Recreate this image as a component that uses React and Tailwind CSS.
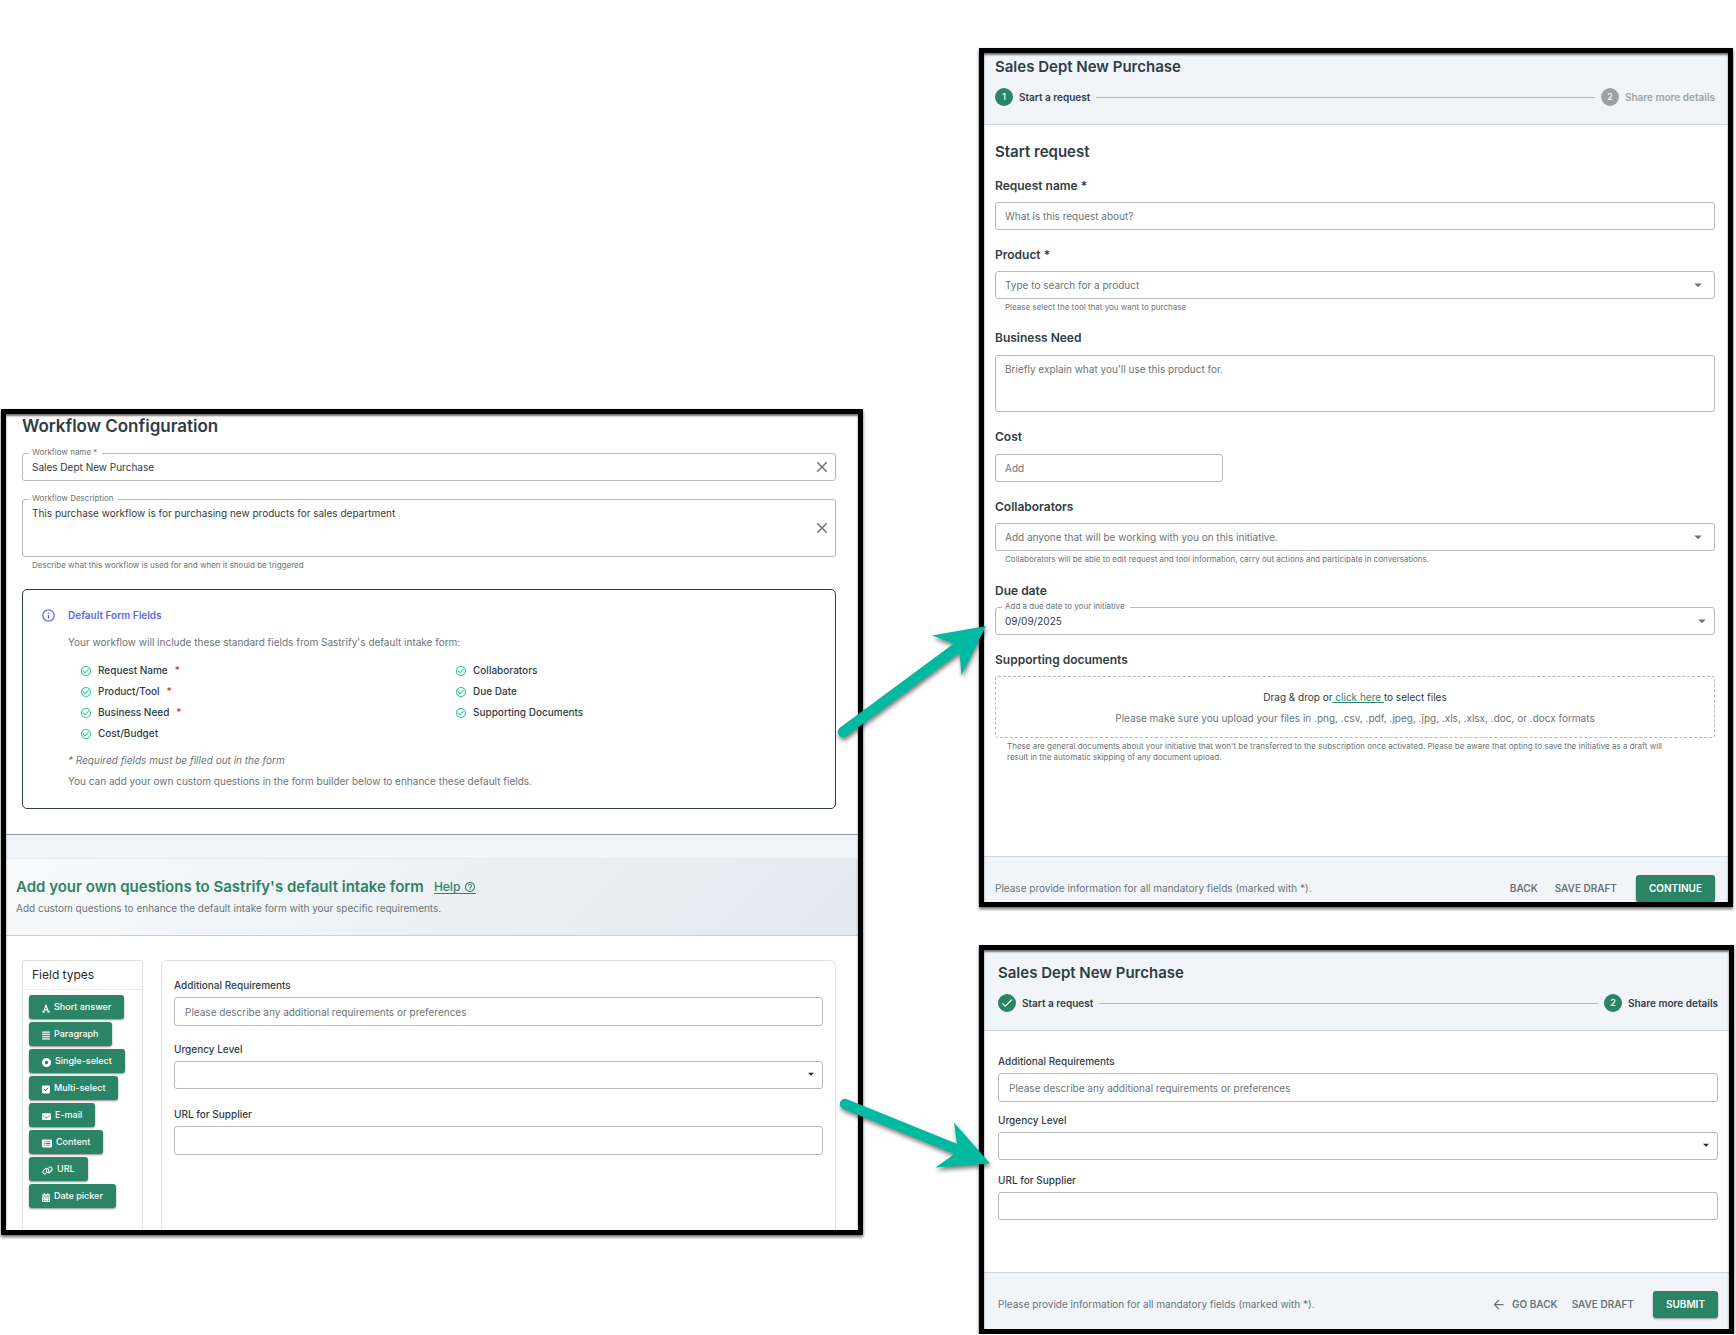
import React, { useId } from "react";
import {
  FaFont,
  FaAlignJustify,
  FaCircleDot,
  FaSquareCheck,
  FaEnvelope,
  FaRectangleList,
  FaLink,
  FaCalendarDays,
} from "react-icons/fa6";
import {
  MdArrowBack,
  MdArrowDropDown,
  MdCheck,
  MdCheckCircleOutline,
  MdClose,
  MdHelpOutline,
  MdInfoOutline,
} from "react-icons/md";

const FIELD_TYPES = [
  { label: "Short answer", Icon: FaFont, width: "w-2" },
  { label: "Paragraph", Icon: FaAlignJustify, width: "w-2" },
  { label: "Single-select", Icon: FaCircleDot, width: "w-[9px]" },
  { label: "Multi-select", Icon: FaSquareCheck, width: "w-2" },
  { label: "E-mail", Icon: FaEnvelope, width: "w-[9px]" },
  { label: "Content", Icon: FaRectangleList, width: "w-[10px]" },
  { label: "URL", Icon: FaLink, width: "w-[11px]" },
  { label: "Date picker", Icon: FaCalendarDays, width: "w-2" },
];

const REQUIRED_DEFAULTS = [
  { label: "Request Name", required: true },
  { label: "Product/Tool", required: true },
  { label: "Business Need", required: true },
  { label: "Cost/Budget" },
];

const OPTIONAL_DEFAULTS = [
  { label: "Collaborators" },
  { label: "Due Date" },
  { label: "Supporting Documents" },
];

function Frame({ className = "", children }) {
  return (
    <div
      className={`relative border-[5px] border-black bg-white shadow-[0_2px_3px_rgba(0,0,0,0.6)] after:pointer-events-none after:absolute after:inset-0 after:shadow-[inset_0_2px_2px_rgba(0,0,0,0.55)] ${className}`}
    >
      {children}
    </div>
  );
}

function FloatingLabel({ htmlFor, children }) {
  return (
    <label
      htmlFor={htmlFor}
      className="absolute -top-[6px] left-[7px] bg-white pr-[5px] pl-[3px] text-[8px] leading-[11px] text-[#6b7478]"
    >
      {children}
    </label>
  );
}

function ClearButton({ label }) {
  return (
    <button
      type="button"
      aria-label={label}
      className="absolute inset-y-0 right-[5px] flex items-center text-[#6b7478]"
    >
      <MdClose size={18} />
    </button>
  );
}

function CheckList({ items }) {
  return (
    <ul>
      {items.map(({ label, required }) => (
        <li key={label} className="flex h-[21px] items-center text-[10px] font-medium text-[#2f3d45]">
          <MdCheckCircleOutline size={12} className="mr-[6px] text-[#36cf98]" />
          {label}
          {required && <span className="ml-[7px] text-[#d32f2f]">*</span>}
        </li>
      ))}
    </ul>
  );
}

function QuestionSelect({ id }) {
  return (
    <div className="relative">
      <select
        id={id}
        defaultValue=""
        className="block h-7 w-full appearance-none rounded-[3px] border border-[#b5b9bb] bg-white px-[10px] text-[10px]"
      >
        <option value=""></option>
      </select>
      <MdArrowDropDown
        size={14}
        className="pointer-events-none absolute top-[6px] right-[5px] text-[#222b30]"
      />
    </div>
  );
}

function CustomQuestions({ roomy }) {
  const id = useId();
  const label = "mb-[5px] block text-[10px] leading-[14px] font-medium text-[#2f3d45]";
  const input =
    "block w-full rounded-[3px] border border-[#b5b9bb] bg-white px-[10px] text-[10px] text-[#2f3d45] placeholder:text-[#6b7478]";
  return (
    <>
      <label htmlFor={`${id}-req`} className={label}>
        Additional Requirements
      </label>
      <input
        id={`${id}-req`}
        type="text"
        placeholder="Please describe any additional requirements or preferences"
        className={`${input} h-[29px]`}
      />
      <div className={roomy ? "mt-4" : "mt-[11px]"}>
        <label htmlFor={`${id}-urgency`} className={label}>
          Urgency Level
        </label>
        <QuestionSelect id={`${id}-urgency`} />
      </div>
      <div className={roomy ? "mt-[18px]" : "mt-[13px]"}>
        <label htmlFor={`${id}-url`} className={label}>
          URL for Supplier
        </label>
        <input id={`${id}-url`} type="url" className={`${input} ${roomy ? "h-[29px]" : "h-7"}`} />
      </div>
    </>
  );
}

function WorkflowConfiguration() {
  return (
    <Frame>
      <div className="pr-[22px] pl-4">
        <h1 className="text-[17px] leading-6 font-semibold text-[#2f3d45]">Workflow Configuration</h1>

        <div className="relative mt-[15px]">
          <FloatingLabel htmlFor="wf-name">Workflow name *</FloatingLabel>
          <input
            id="wf-name"
            type="text"
            defaultValue="Sales Dept New Purchase"
            className="block h-7 w-full rounded-[3px] border border-[#b5b9bb] pr-8 pl-[9px] text-[10px] text-[#2f3d45]"
          />
          <ClearButton label="Clear workflow name" />
        </div>

        <div className="relative mt-[18px]">
          <FloatingLabel htmlFor="wf-desc">Workflow Description</FloatingLabel>
          <textarea
            id="wf-desc"
            defaultValue="This purchase workflow is for purchasing new products for sales department"
            className="block h-[58px] w-full resize-none rounded-[3px] border border-[#b5b9bb] pt-[5px] pr-8 pl-[9px] text-[10px] leading-4 text-[#2f3d45]"
          />
          <ClearButton label="Clear workflow description" />
        </div>
        <p className="mt-[3px] pl-[10px] text-[8px] leading-[11px] text-[#6b7478]">
          Describe what this workflow is used for and when it should be triggered
        </p>

        <section className="mt-[18px] flex gap-3 rounded-[5px] border border-[#2f3d45] pt-[18px] pr-[5px] pb-[19px] pl-[18px]">
          <MdInfoOutline size={15} className="shrink-0 text-[#6366f1]" />
          <div className="min-w-0 flex-1">
            <h2 className="text-[10px] leading-[14px] font-semibold text-[#6366f1]">Default Form Fields</h2>
            <p className="mt-3 text-[10px] leading-4 text-[#6b7478]">
              Your workflow will include these standard fields from Sastrify's default intake form:
            </p>
            <div className="mt-[10px] grid grid-cols-2 pl-3">
              <CheckList items={REQUIRED_DEFAULTS} />
              <CheckList items={OPTIONAL_DEFAULTS} />
            </div>
            <p className="mt-2 text-[10px] leading-4 text-[#6b7478] italic">
              * Required fields must be filled out in the form
            </p>
            <p className="mt-[5px] text-[10px] leading-4 text-[#6b7478]">
              You can add your own custom questions in the form builder below to enhance these default fields.
            </p>
          </div>
        </section>
      </div>

      <div className="mt-[25px] h-6 border-t border-[#92979b] bg-[#f1f5fa]" />
      <section className="border-t border-b border-t-[#e8e9eb] border-b-[#cbd0d8] bg-linear-135 from-[#f9fafb] to-[#e1e8f0] px-[10px] pt-[18px] pb-[19px]">
        <div className="flex items-center gap-[10px]">
          <h2 className="text-[15px] leading-5 font-semibold text-[#2b8465]">
            Add your own questions to Sastrify's default intake form
          </h2>
          <a
            href="#help"
            className="flex items-center gap-1 border-b border-[#2b8465] text-[12px] leading-[13px] font-medium text-[#2b8465]"
          >
            Help <MdHelpOutline size={12} />
          </a>
        </div>
        <p className="mt-[3px] text-[10px] leading-4 text-[#6b7478]">
          Add custom questions to enhance the default intake form with your specific requirements.
        </p>
      </section>

      <div className="flex gap-[18px] pt-6 pr-[22px] pl-4">
        <section className="w-[121px] shrink-0 rounded-t-[3px] border border-b-0 border-[#dfe1e3]">
          <h3 className="border-b border-[#e8eaeb] pl-[9px] text-[12px] leading-[28px] text-[#1f2a30]">
            Field types
          </h3>
          <div className="flex flex-col items-start gap-[3px] px-[6px] pt-[5px] pb-[22px]">
            {FIELD_TYPES.map(({ label, Icon, width }) => (
              <button
                key={label}
                type="button"
                className="flex h-6 items-center gap-1 rounded-[3px] bg-[#2b8465] px-[13px] text-[9px] font-medium text-white shadow-[0_1px_2px_rgba(0,0,0,0.45)]"
              >
                <Icon className={`mt-[2px] h-[9px] ${width}`} />
                {label}
              </button>
            ))}
          </div>
        </section>
        <section className="min-w-0 flex-1 rounded-t-[6px] border border-b-0 border-[#dfe1e3] px-3 pt-[17px]">
          <CustomQuestions roomy />
        </section>
      </div>
    </Frame>
  );
}

function StepMarker({ done, active, number }) {
  return (
    <span
      className={`flex h-[18px] w-[18px] shrink-0 items-center justify-center rounded-full text-[9px] font-medium text-white ${
        active ? "bg-[#2b8465]" : "bg-[#9ea1a3]"
      }`}
    >
      {done ? <MdCheck size={14} /> : number}
    </span>
  );
}

function RequestHeader({ step, className }) {
  return (
    <header className={`border-b border-[#cfd3da] bg-[#f1f5fa] pb-[18px] ${className}`}>
      <h2 className="text-[15px] leading-5 font-semibold text-[#2f3d45]">Sales Dept New Purchase</h2>
      <ol className="mt-[11px] flex items-center text-[10px] font-semibold">
        <li className="flex items-center gap-[6px] text-[#2f3d45]">
          <StepMarker active done={step > 1} number={1} />
          Start a request
        </li>
        <li aria-hidden="true" className="mx-[6px] h-px flex-1 bg-[#b5b9bb]" />
        <li className={`flex items-center gap-[6px] ${step > 1 ? "text-[#2f3d45]" : "text-[#9ea1a3]"}`}>
          <StepMarker active={step > 1} number={2} />
          Share more details
        </li>
      </ol>
    </header>
  );
}

function RequestFooter({ className, backIcon, back, action }) {
  return (
    <footer
      className={`flex items-center border-t border-[#cfd3da] bg-[#f1f5fa] pt-[18px] text-[10px] text-[#6b7478] ${className}`}
    >
      <p className="flex-1">Please provide information for all mandatory fields (marked with *).</p>
      <button type="button" className="flex items-center gap-[6px] font-semibold">
        {backIcon && <MdArrowBack size={15} />}
        {back}
      </button>
      <button type="button" className={`mr-[19px] font-semibold ${backIcon ? "ml-[14px]" : "ml-[17px]"}`}>
        SAVE DRAFT
      </button>
      <button
        type="button"
        className="h-[27px] rounded-[3px] bg-[#2b8465] px-[13px] font-semibold text-white shadow-[0_1px_2px_rgba(0,0,0,0.4)]"
      >
        {action}
      </button>
    </footer>
  );
}

const labelClass = "block text-[12px] leading-[18px] font-semibold text-[#2f3d45]";
const controlClass =
  "block w-full rounded-[3px] border border-[#b5b9bb] bg-white px-[9px] text-[10px] placeholder:text-[#6b7478]";
const hintClass = "mt-[3px] text-[8px] leading-[11px] text-[#6b7478]";

function RequestSelect({ id, label, value, hint }) {
  return (
    <div className="mt-4">
      <label htmlFor={id} className={labelClass}>
        {label}
      </label>
      <div className="relative mt-[7px]">
        <select id={id} className={`${controlClass} h-7 appearance-none text-[#6b7478]`}>
          <option>{value}</option>
        </select>
        <MdArrowDropDown
          size={18}
          className="pointer-events-none absolute top-[5px] right-2 text-[#6b7478]"
        />
      </div>
      <p className={`${hintClass} pl-[10px]`}>{hint}</p>
    </div>
  );
}

function StartRequest() {
  return (
    <Frame className="mr-px">
      <RequestHeader step={1} className="pt-1 pr-[13px] pl-[11px]" />
      <div className="pt-[17px] pr-[13px] pb-[93px] pl-[11px]">
        <h3 className="text-[15px] leading-5 font-semibold text-[#2f3d45]">Start request</h3>
        <div className="mt-[15px]">
          <label htmlFor="rq-name" className={labelClass}>
            Request name *
          </label>
          <input
            id="rq-name"
            type="text"
            placeholder="What is this request about?"
            className={`${controlClass} mt-[7px] h-7`}
          />
        </div>
        <RequestSelect
          id="rq-product"
          label="Product *"
          value="Type to search for a product"
          hint="Please select the tool that you want to purchase"
        />
        <div className="mt-4">
          <label htmlFor="rq-need" className={labelClass}>
            Business Need
          </label>
          <textarea
            id="rq-need"
            placeholder="Briefly explain what you'll use this product for."
            className={`${controlClass} mt-2 h-[57px] resize-none pt-[5px] leading-4`}
          />
        </div>
        <div className="mt-4">
          <label htmlFor="rq-cost" className={labelClass}>
            Cost
          </label>
          <div className="mt-2 w-[228px]">
            <input id="rq-cost" type="text" placeholder="Add" className={`${controlClass} h-7`} />
          </div>
        </div>
        <RequestSelect
          id="rq-collab"
          label="Collaborators"
          value="Add anyone that will be working with you on this initiative."
          hint="Collaborators will be able to edit request and tool information, carry out actions and participate in conversations."
        />
        <div className="mt-[17px]">
          <h4 className={labelClass}>Due date</h4>
          <div className="relative mt-[7px]">
            <FloatingLabel htmlFor="rq-due">Add a due date to your initiative</FloatingLabel>
            <select id="rq-due" className={`${controlClass} h-7 appearance-none text-[#2f3d45]`}>
              <option>09/09/2025</option>
            </select>
            <MdArrowDropDown
              size={18}
              className="pointer-events-none absolute top-[5px] right-1 text-[#6b7478]"
            />
          </div>
        </div>
        <div className="mt-4">
          <h4 className={labelClass}>Supporting documents</h4>
          <div className="mt-[7px] rounded-[3px] border border-dashed border-[#b5b9bb] pt-[10px] pb-[9px] text-center text-[10px] leading-5">
            <p className="text-[#2f3d45]">
              Drag &amp; drop or
              <a href="#upload" className="whitespace-pre text-[#2b8465] underline">
                {" click here "}
              </a>
              to select files
            </p>
            <p className="mt-px text-[#6b7478]">
              Please make sure you upload your files in .png, .csv, .pdf, .jpeg, .jpg, .xls, .xlsx, .doc, or .docx
              formats
            </p>
          </div>
          <p className={`${hintClass} pr-8 pl-3`}>
            These are general documents about your initiative that won't be transferred to the subscription once
            activated. Please be aware that opting to save the initiative as a draft will result in the automatic
            skipping of any document upload.
          </p>
        </div>
      </div>
      <RequestFooter className="pr-[13px] pl-[11px]" back="BACK" action="CONTINUE" />
    </Frame>
  );
}

function ShareDetails() {
  return (
    <Frame className="mt-[38px]">
      <RequestHeader step={2} className="pt-[13px] pr-[11px] pl-[14px]" />
      <div className="pt-[23px] pr-[11px] pb-[52px] pl-[14px]">
        <CustomQuestions />
      </div>
      <RequestFooter className="pr-[11px] pb-[11px] pl-[14px]" backIcon back="GO BACK" action="SUBMIT" />
    </Frame>
  );
}

function Arrows() {
  return (
    <svg
      aria-hidden="true"
      viewBox="0 0 160 560"
      className="pointer-events-none absolute top-[207px] -right-[133px] z-10 h-[560px] w-[160px] drop-shadow-[1px_3px_2px_rgba(0,0,0,0.5)]"
      fill="#00b9a1"
      stroke="#00b9a1"
    >
      <path d="M7 116 122 31" fill="none" strokeWidth="10.5" strokeLinecap="round" />
      <path d="M96 19.5 150 10 125.500 59 123.500 36 117.500 27.500Z" stroke="none" />
      <path d="M9 488 120 533" fill="none" strokeWidth="10.5" strokeLinecap="round" />
      <path d="M118 506.500 154 547.500 99.500 551.500 117 539 121 528Z" stroke="none" />
    </svg>
  );
}

export default function App() {
  return (
    <main className="grid grid-cols-[862fr_755fr] items-start gap-x-[116px] bg-white pr-[2px] pl-px font-['Inter',sans-serif]">
      <div className="relative mt-[409px] min-w-0">
        <WorkflowConfiguration />
        <Arrows />
      </div>
      <div className="mt-12 min-w-0">
        <StartRequest />
        <ShareDetails />
      </div>
    </main>
  );
}
